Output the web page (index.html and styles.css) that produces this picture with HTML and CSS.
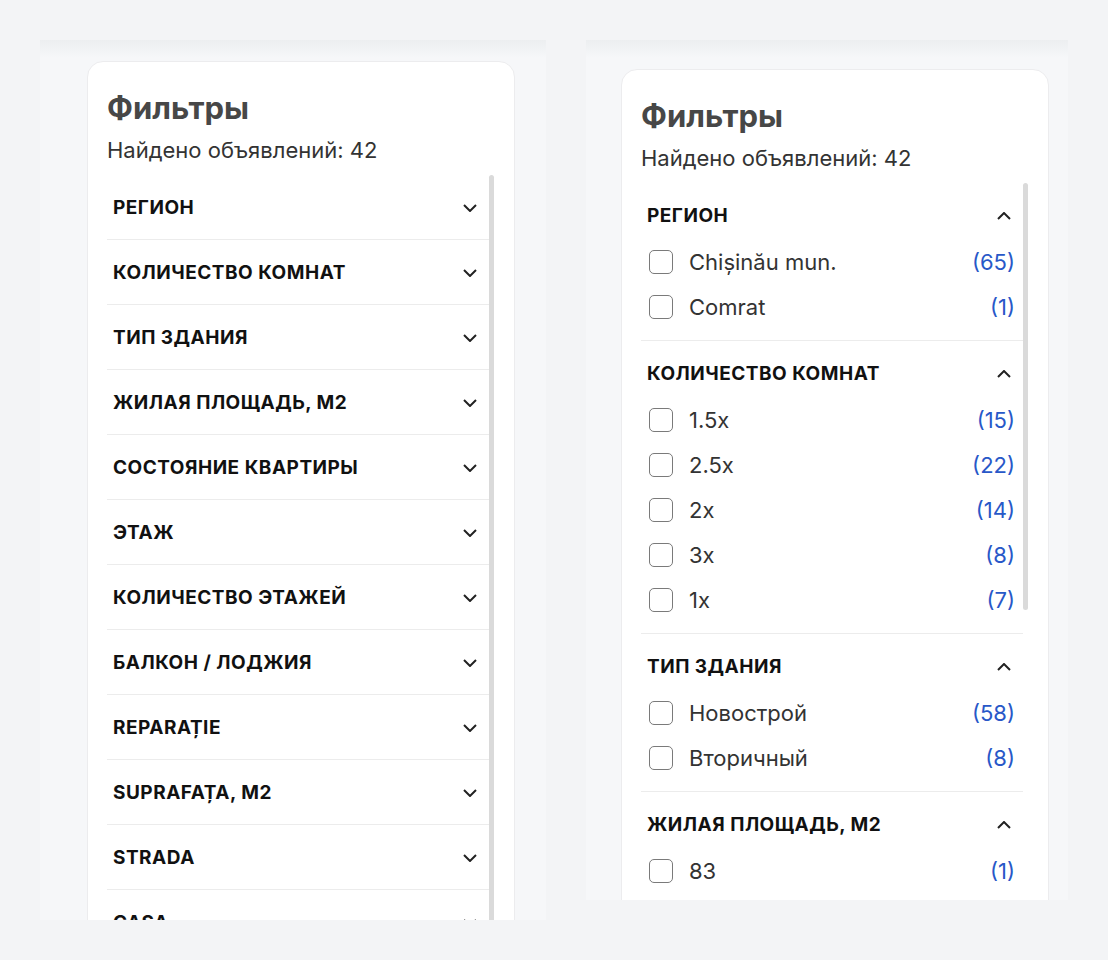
FILE: index.html
```html
<!DOCTYPE html>
<html lang="ru">

<head>
    <meta charset="UTF-8">
    <meta name="viewport" content="width=device-width, initial-scale=1.0">
    <title>Фильтры</title>
    <link rel="stylesheet" href="styles.css">
</head>

<body>
    <div class="frame frame-collapsed">
        <div class="card">
            <h2 class="card-title">Фильтры</h2>
            <p class="card-subtitle">Найдено объявлений: 42</p>
            <div class="filter-body">
                <div class="filter-list">
                    <div class="section"><div class="section-head"><span>Регион</span><svg class="chevron" viewBox="0 0 14 8"><polyline points="1,1 7,7 13,1"/></svg></div></div>
                    <div class="section"><div class="section-head"><span>Количество комнат</span><svg class="chevron" viewBox="0 0 14 8"><polyline points="1,1 7,7 13,1"/></svg></div></div>
                    <div class="section"><div class="section-head"><span>Тип здания</span><svg class="chevron" viewBox="0 0 14 8"><polyline points="1,1 7,7 13,1"/></svg></div></div>
                    <div class="section"><div class="section-head"><span>Жилая площадь, м2</span><svg class="chevron" viewBox="0 0 14 8"><polyline points="1,1 7,7 13,1"/></svg></div></div>
                    <div class="section"><div class="section-head"><span>Состояние квартиры</span><svg class="chevron" viewBox="0 0 14 8"><polyline points="1,1 7,7 13,1"/></svg></div></div>
                    <div class="section"><div class="section-head"><span>Этаж</span><svg class="chevron" viewBox="0 0 14 8"><polyline points="1,1 7,7 13,1"/></svg></div></div>
                    <div class="section"><div class="section-head"><span>Количество этажей</span><svg class="chevron" viewBox="0 0 14 8"><polyline points="1,1 7,7 13,1"/></svg></div></div>
                    <div class="section"><div class="section-head"><span>Балкон / лоджия</span><svg class="chevron" viewBox="0 0 14 8"><polyline points="1,1 7,7 13,1"/></svg></div></div>
                    <div class="section"><div class="section-head"><span>Reparație</span><svg class="chevron" viewBox="0 0 14 8"><polyline points="1,1 7,7 13,1"/></svg></div></div>
                    <div class="section"><div class="section-head"><span>Suprafața, m2</span><svg class="chevron" viewBox="0 0 14 8"><polyline points="1,1 7,7 13,1"/></svg></div></div>
                    <div class="section"><div class="section-head"><span>Strada</span><svg class="chevron" viewBox="0 0 14 8"><polyline points="1,1 7,7 13,1"/></svg></div></div>
                    <div class="section"><div class="section-head"><span>Casa</span><svg class="chevron" viewBox="0 0 14 8"><polyline points="1,1 7,7 13,1"/></svg></div></div>
                </div>
                <div class="scroll-track"><div class="scroll-thumb"></div></div>
            </div>
        </div>
    </div>

    <div class="frame frame-expanded">
        <div class="card">
            <h2 class="card-title">Фильтры</h2>
            <p class="card-subtitle">Найдено объявлений: 42</p>
            <div class="filter-body">
                <div class="filter-list">
                    <div class="section open">
                        <div class="section-head"><span>Регион</span><svg class="chevron" viewBox="0 0 14 8"><polyline points="1,7 7,1 13,7"/></svg></div>
                        <label class="option"><input type="checkbox"><span class="option-name">Chișinău mun.</span><span class="option-count">(65)</span></label>
                        <label class="option"><input type="checkbox"><span class="option-name">Comrat</span><span class="option-count">(1)</span></label>
                    </div>
                    <div class="section open">
                        <div class="section-head"><span>Количество комнат</span><svg class="chevron" viewBox="0 0 14 8"><polyline points="1,7 7,1 13,7"/></svg></div>
                        <label class="option"><input type="checkbox"><span class="option-name">1.5x</span><span class="option-count">(15)</span></label>
                        <label class="option"><input type="checkbox"><span class="option-name">2.5x</span><span class="option-count">(22)</span></label>
                        <label class="option"><input type="checkbox"><span class="option-name">2x</span><span class="option-count">(14)</span></label>
                        <label class="option"><input type="checkbox"><span class="option-name">3x</span><span class="option-count">(8)</span></label>
                        <label class="option"><input type="checkbox"><span class="option-name">1x</span><span class="option-count">(7)</span></label>
                    </div>
                    <div class="section open">
                        <div class="section-head"><span>Тип здания</span><svg class="chevron" viewBox="0 0 14 8"><polyline points="1,7 7,1 13,7"/></svg></div>
                        <label class="option"><input type="checkbox"><span class="option-name">Новострой</span><span class="option-count">(58)</span></label>
                        <label class="option"><input type="checkbox"><span class="option-name">Вторичный</span><span class="option-count">(8)</span></label>
                    </div>
                    <div class="section open">
                        <div class="section-head"><span>Жилая площадь, м2</span><svg class="chevron" viewBox="0 0 14 8"><polyline points="1,7 7,1 13,7"/></svg></div>
                        <label class="option"><input type="checkbox"><span class="option-name">83</span><span class="option-count">(1)</span></label>
                    </div>
                </div>
                <div class="scroll-track"><div class="scroll-thumb"></div></div>
            </div>
        </div>
    </div>
</body>

</html>
```

FILE: styles.css
```css
body {
    background-color: #f3f4f6;
    margin: 0;
    padding: 40px;
    display: flex;
    align-items: flex-start;
    gap: 40px;
    font-family: Inter, "Noto Sans", sans-serif;
}

.frame {
    background: linear-gradient(to bottom, #eceef0, #f6f7f9 18px);
    overflow: hidden;
    flex-shrink: 0;
    box-sizing: border-box;
}

.frame-collapsed {
    width: 506px;
    height: 880px;
    padding: 21px 31px 0 47px;
}

.frame-expanded {
    width: 482px;
    height: 860px;
    padding: 29px 19px 0 35px;
}

.card {
    background-color: #ffffff;
    border: 1px solid #ececee;
    border-radius: 16px;
    padding: 29px 19px 20px 19px;
    box-sizing: border-box;
    width: 428px;
}

.card-title {
    margin: 0;
    font-size: 31px;
    line-height: 34px;
    font-weight: 700;
    color: #474747;
}

.card-subtitle {
    margin: 11px 0 11px 0;
    font-size: 22px;
    line-height: 28px;
    color: #333333;
}

/* list + drawn scrollbar */
.filter-body {
    display: flex;
    align-items: flex-start;
}

.filter-list {
    flex: 1;
    min-width: 0;
}

.scroll-track {
    width: 6px;
}

.scroll-thumb {
    width: 5px;
    border-radius: 3px;
    background-color: #dadada;
}

.frame-collapsed .scroll-thumb {
    height: 800px;
}

.frame-expanded .scroll-thumb {
    height: 427px;
}

/* one filter group */
.section {
    border-bottom: 1px solid #ececec;
}

.section.open {
    padding-bottom: 11px;
}

.section-head {
    display: flex;
    justify-content: space-between;
    align-items: center;
    padding: 21px 12px 19px 6px;
    font-size: 19px;
    line-height: 24px;
    font-weight: 700;
    letter-spacing: 0.5px;
    text-transform: uppercase;
    color: #111111;
}

.section.open .section-head {
    padding-bottom: 11px;
}

.chevron {
    width: 14px;
    height: 8px;
    fill: none;
    stroke: #222222;
    stroke-width: 2;
}

.option {
    display: flex;
    align-items: center;
    height: 45px;
    padding: 0 8px;
    font-size: 22px;
    color: #333333;
}

.option input {
    appearance: none;
    -webkit-appearance: none;
    width: 24px;
    height: 24px;
    margin: 0 16px 0 0;
    border: 1.5px solid #7a7a7a;
    border-radius: 5px;
    background: #ffffff;
}

.option-name {
    flex: 1;
}

.option-count {
    color: #2858c8;
}
```
